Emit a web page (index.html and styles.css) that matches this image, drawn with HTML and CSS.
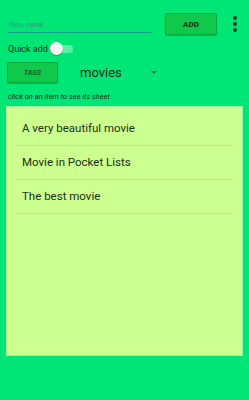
FILE: index.html
```html
<!DOCTYPE html>
<html lang="en">
<head>
    <meta charset="UTF-8">
    <meta name="viewport" content="width=device-width, initial-scale=1.0">
    <title>Pocket Lists</title>
    <link rel="stylesheet" href="styles.css">
</head>
<body>
    <div class="topRow">
        <input class="itemInput" type="text" placeholder="Item name">
        <button class="addButton">ADD</button>
        <div class="overflow">
            <span></span><span></span><span></span>
        </div>
    </div>

    <div class="quickRow">
        <span class="quickLabel">Quick add</span>
        <div class="switch"><div class="thumb"></div></div>
    </div>

    <div class="tagRow">
        <button class="tagsButton">TAGS</button>
        <div class="spinner">
            <span class="spinnerText">movies</span>
            <span class="arrow"></span>
        </div>
    </div>

    <p class="hint">click on an item to see its sheet</p>

    <div class="listPanel">
        <ul class="itemList">
            <li>A very beautiful movie</li>
            <li>Movie in Pocket Lists</li>
            <li>The best movie</li>
        </ul>
    </div>
</body>
</html>
```

FILE: styles.css
```css
html {
    background-color: #00e676;
}

body {
    margin: 0;
    width: 249px;
    height: 400px;
    background-color: #00e676;
    font-family: 'Roboto', 'Liberation Sans', sans-serif;
    color: #1b2b16;
    overflow: hidden;
}

.topRow {
    display: flex;
    align-items: center;
    height: 22px;
    padding: 13px 0 0 8px;
}

.itemInput {
    width: 144px;
    height: 16px;
    margin-top: 2px;
    padding: 0 2px;
    box-sizing: border-box;
    border: none;
    border-bottom: 1px solid #0aa085;
    background: transparent;
    font-family: inherit;
    font-size: 7px;
    outline: none;
}

.itemInput::placeholder {
    color: #2f9a78;
}

.addButton {
    margin-left: 13px;
    width: 52px;
    height: 22px;
    background-color: #10c84a;
    border: 1px solid #08a83c;
    border-radius: 2px;
    box-shadow: 0 1px 1px rgba(0, 0, 0, 0.2);
    font-family: inherit;
    font-size: 8px;
    font-weight: bold;
    color: #1b2b16;
    padding: 0;
}

.overflow {
    margin-left: 16px;
    display: flex;
    flex-direction: column;
    gap: 2px;
}

.overflow span {
    width: 4px;
    height: 4px;
    border-radius: 50%;
    background-color: #1f3a25;
}

.quickRow {
    display: flex;
    align-items: center;
    margin-top: 8px;
    padding-left: 8px;
    height: 12px;
}

.quickLabel {
    font-size: 9px;
}

.switch {
    position: relative;
    margin-left: 3px;
    width: 22px;
    height: 8px;
    border-radius: 4px;
    background-color: rgba(255, 255, 255, 0.35);
}

.thumb {
    position: absolute;
    left: -1px;
    top: -3px;
    width: 13px;
    height: 13px;
    border-radius: 50%;
    background-color: #f4f4f4;
    box-shadow: 0 1px 1px rgba(0, 0, 0, 0.25);
}

.tagRow {
    display: flex;
    align-items: center;
    margin-top: 7px;
    padding-left: 7px;
}

.tagsButton {
    width: 51px;
    height: 21px;
    padding: 0;
    background-color: #10c84a;
    border: 1px solid #08a83c;
    border-radius: 2px;
    box-shadow: 0 1px 1px rgba(0, 0, 0, 0.2);
    font-family: inherit;
    font-size: 7px;
    font-style: italic;
    color: #1b2b16;
}

.spinner {
    display: flex;
    align-items: center;
    margin-left: 22px;
}

.spinnerText {
    font-size: 13px;
}

.arrow {
    margin-left: 29px;
    width: 0;
    height: 0;
    border-left: 3px solid transparent;
    border-right: 3px solid transparent;
    border-top: 3px solid #3c6b4a;
}

.hint {
    margin: 9px 0 0 8px;
    font-size: 7.5px;
    font-style: italic;
}

.listPanel {
    margin: 5px 6px 0 6px;
    height: 250px;
    box-sizing: border-box;
    background-color: #ccff90;
    border: 1px solid #a8f0a0;
    padding: 5px 9px 0 9px;
}

.itemList {
    list-style: none;
    margin: 0;
    padding: 0;
}

.itemList li {
    height: 33px;
    line-height: 33px;
    padding-left: 6px;
    border-bottom: 1px solid #b8ea82;
    font-size: 11.5px;
    color: #1a3012;
}
```
